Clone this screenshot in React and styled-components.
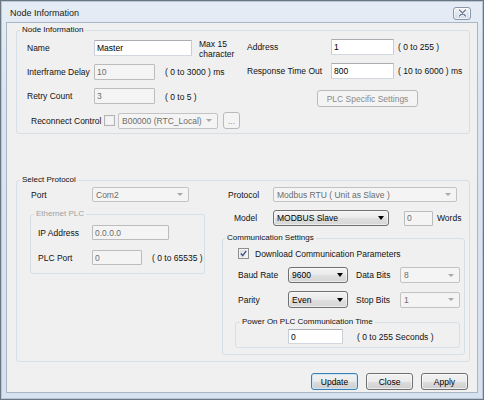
import React from "react";
import styled, { createGlobalStyle, css } from "styled-components";

const FONT = `"Liberation Sans", Arial, sans-serif`;

const GlobalStyle = createGlobalStyle`
  html, body { margin: 0; padding: 0; background: #ffffff; }
  body { font-family: ${FONT}; }
  * { box-sizing: border-box; }
`;

const Window = styled.div`
  width: 484px;
  height: 400px;
  border: 1px solid #6b7683;
  box-shadow: inset 0 0 0 1px #b9c6d6;
  background: linear-gradient(180deg, #e5ecf5 0%, #dbe5f1 25%, #d7e2ef 100%);
  display: flex;
  flex-direction: column;
  padding: 0 5px 6px 5px;
`;

const TitleBar = styled.div`
  height: 21px;
  flex: none;
  display: flex;
  align-items: center;
  justify-content: space-between;
  padding: 3px 7px 0 4px;
`;

const TitleText = styled.span`
  font-size: 9px;
  color: #222;
`;

const CloseButton = styled.div`
  width: 18px;
  height: 13px;
  border: 1px solid #8797ac;
  border-radius: 3px;
  background: linear-gradient(180deg, #f0f4f8 0%, #dde5ef 55%, #d2dce8 100%);
  box-shadow: inset 0 0 0 1px rgba(255, 255, 255, 0.6);
  display: flex;
  align-items: center;
  justify-content: center;
`;

const Panel = styled.div`
  flex: 1;
  background: #f0f0f0;
  border: 1px solid #a9b6c5;
  display: flex;
  flex-direction: column;
`;

const Group = styled.fieldset`
  margin: ${(p) => p.$m || 0};
  padding: 0;
  min-width: 0;
  border: 1px solid #d5dfe5;
  border-radius: 3px;
`;

const Legend = styled.legend`
  margin-left: ${(p) => p.$ml ?? 3}px;
  padding: 0 2px;
  font-size: 8px;
  line-height: 10px;
  color: ${(p) => (p.$disabled ? "#a2a2a2" : "#111")};
`;

const Body = styled.div`
  display: flex;
  flex-direction: ${(p) => p.$dir || "column"};
  gap: ${(p) => p.$gap || 0}px;
  padding: ${(p) => p.$pad || 0};
`;

const Column = styled.div`
  display: flex;
  flex-direction: column;
  flex: none;
  width: ${(p) => p.$w}px;
  gap: ${(p) => p.$gap || 0}px;
  padding-top: ${(p) => p.$pt || 0}px;
`;

const Row = styled.div`
  display: flex;
  align-items: center;
  height: ${(p) => p.$h || 16}px;
  margin-top: ${(p) => p.$mt || 0}px;
  padding-left: ${(p) => p.$indent || 0}px;
`;

const Label = styled.span`
  flex: none;
  width: ${(p) => (p.$w ? `${p.$w}px` : "auto")};
  margin-left: ${(p) => p.$ml || 0}px;
  padding-left: ${(p) => p.$indent || 0}px;
  font-size: 8.5px;
  line-height: 10px;
  color: #111;
  white-space: nowrap;
`;

const Note = styled.span`
  flex: none;
  margin-left: ${(p) => p.$ml || 0}px;
  margin-top: ${(p) => p.$mt || 0}px;
  font-size: 8.5px;
  line-height: 10px;
  color: #111;
  white-space: nowrap;
`;

const TextBox = styled.input`
  flex: none;
  width: ${(p) => p.$w}px;
  height: ${(p) => p.$h || 16}px;
  margin: 0 0 0 ${(p) => p.$ml || 0}px;
  padding: 0 0 0 2px;
  font-family: ${FONT};
  font-size: 8.5px;
  color: #000;
  background: #ffffff;
  border: 1px solid;
  border-color: #abadb3 #c8ccd3 #d3d8de #c8ccd3;
  border-radius: 1px;
  outline: none;
  &:disabled {
    background: #f4f4f4;
    border-color: #bcbcbc;
    color: #6d6d6d;
    -webkit-text-fill-color: #6d6d6d;
    opacity: 1;
  }
`;

const Combo = styled.div`
  flex: none;
  width: ${(p) => p.$w}px;
  height: ${(p) => p.$h || 16}px;
  display: flex;
  align-items: center;
  padding-left: 3px;
  font-size: 8.5px;
  border-radius: 2px;
  ${(p) =>
    p.$list
      ? css`
          border: 1px solid #707070;
          border-radius: 3px;
          background: linear-gradient(180deg, #f3f3f3 0%, #eaeaea 50%, #dfdfdf 51%, #d6d6d6 100%);
          box-shadow: inset 0 0 0 1px rgba(255, 255, 255, 0.55);
          color: #000;
        `
      : css`
          border: 1px solid #c3c3c3;
          background: #f4f4f4;
          color: #6d6d6d;
        `}
`;

const ComboText = styled.span`
  flex: 1;
  overflow: hidden;
  white-space: nowrap;
`;

const Arrow = styled.span`
  flex: none;
  width: 0;
  height: 0;
  margin-right: ${(p) => (p.$list ? 4 : 5)}px;
  border-left: ${(p) => (p.$list ? 3.5 : 3)}px solid transparent;
  border-right: ${(p) => (p.$list ? 3.5 : 3)}px solid transparent;
  border-top: ${(p) => (p.$list ? 4 : 3)}px solid ${(p) => (p.$list ? "#000" : "#a8a8a8")};
`;

const CheckBox = styled.span`
  flex: none;
  width: 11px;
  height: 11px;
  margin-left: ${(p) => p.$ml || 0}px;
  border: 1px solid ${(p) => (p.$disabled ? "#b4b4b4" : "#8e8f8f")};
  background: ${(p) =>
    p.$disabled ? "#f4f4f4" : "linear-gradient(135deg, #dcdcdc 0%, #f7f7f7 100%)"};
  box-shadow: inset 0 0 0 1px ${(p) => (p.$disabled ? "#eeeeee" : "#f2f2f2")};
  display: flex;
  align-items: center;
  justify-content: center;
`;

const Button = styled.button`
  flex: none;
  width: ${(p) => p.$w}px;
  height: ${(p) => p.$h || 17}px;
  margin: ${(p) => p.$mt || 0}px 0 0 ${(p) => p.$ml || 0}px;
  padding: 0;
  font-family: ${FONT};
  font-size: 8.5px;
  color: #000;
  border: 1px solid #707070;
  border-radius: 3px;
  background: linear-gradient(180deg, #f2f2f2 0%, #ebebeb 50%, #dddddd 51%, #cfcfcf 100%);
  box-shadow: inset 0 0 0 1px rgba(255, 255, 255, 0.6);
  ${(p) =>
    p.$default &&
    css`
      border-color: #3c7fb1;
      box-shadow: inset 0 0 0 1px #cde6f7;
    `}
  &:disabled {
    border-color: #b8babc;
    background: #f4f4f4;
    color: #8a8a8a;
    box-shadow: none;
  }
`;

const ButtonBar = styled.div`
  display: flex;
  justify-content: flex-end;
  gap: 8px;
  margin-top: 11px;
  padding-right: 9px;
`;

const NoteStack = styled.span`
  display: flex;
  flex-direction: column;
  margin-left: ${(p) => p.$ml || 0}px;
  margin-top: 2px;
  font-size: 8.5px;
  line-height: 10px;
  color: #111;
  white-space: nowrap;
`;

function DropDown({ w, h, list, children }) {
  return (
    <Combo $w={w} $h={h} $list={list}>
      <ComboText>{children}</ComboText>
      <Arrow $list={list} />
    </Combo>
  );
}

export default function App() {
  return (
    <>
      <GlobalStyle />
      <Window>
        <TitleBar>
          <TitleText>Node Information</TitleText>
          <CloseButton>
            <svg width="9" height="8" viewBox="0 0 9 8">
              <path d="M1.5 1 L7.5 7 M7.5 1 L1.5 7" stroke="#ffffff" strokeWidth="3" strokeLinecap="round" />
              <path d="M1.5 1 L7.5 7 M7.5 1 L1.5 7" stroke="#6f7e92" strokeWidth="1.5" strokeLinecap="round" />
            </svg>
          </CloseButton>
        </TitleBar>

        <Panel>
          <Group $m="2px 7px 0 9px">
            <Legend>Node Information</Legend>
            <Body $dir="row" $pad="4px 0 4px 10px">
              <Column $w={220} $gap={8} $pt={1}>
                <Row>
                  <Label $w={67}>Name</Label>
                  <TextBox $w={98} readOnly value="Master" />
                  <NoteStack $ml={7}>
                    <span>Max 15</span>
                    <span>character</span>
                  </NoteStack>
                </Row>
                <Row>
                  <Label $w={67}>Interframe Delay</Label>
                  <TextBox $w={61} disabled value="10" />
                  <Note $ml={10}>( 0 to 3000 ) ms</Note>
                </Row>
                <Row>
                  <Label $w={67}>Retry Count</Label>
                  <TextBox $w={61} disabled value="3" />
                  <Note $ml={10} $mt={2}>( 0 to 5 )</Note>
                </Row>
                <Row $h={17}>
                  <Label $w={77} $indent={4}>Reconnect Control</Label>
                  <CheckBox $disabled />
                  <Combo $w={100} $h={16} style={{ marginLeft: 3 }}>
                    <ComboText>B00000 (RTC_Local)</ComboText>
                    <Arrow />
                  </Combo>
                  <Button $w={17} $h={17} $ml={5} disabled>
                    ...
                  </Button>
                </Row>
              </Column>
              <Column $w={220} $gap={8}>
                <Row>
                  <Label $w={84}>Address</Label>
                  <TextBox $w={63} readOnly value="1" />
                  <Note $ml={4}>( 0 to 255 )</Note>
                </Row>
                <Row>
                  <Label $w={84}>Response Time Out</Label>
                  <TextBox $w={63} readOnly value="800" />
                  <Note $ml={4}>( 10 to 6000 ) ms</Note>
                </Row>
                <Row $h={17} $mt={3}>
                  <Button $w={101} $ml={70} disabled>
                    PLC Specific Settings
                  </Button>
                </Row>
              </Column>
            </Body>
          </Group>

          <Group $m="41px 7px 0 9px">
            <Legend>Select Protocol</Legend>
            <Body $dir="row" $gap={17} $pad="2px 4px 6px 13px">
              <Column $w={175}>
                <Row $h={15}>
                  <Label $w={62} $indent={1}>Port</Label>
                  <DropDown w={97} h={15}>Com2</DropDown>
                </Row>
                <Group $m="7px 0 0 0">
                  <Legend $disabled>Ethernet PLC</Legend>
                  <Body $gap={10} $pad="6px 0 8px 7px">
                    <Row $h={15}>
                      <Label $w={54}>IP Address</Label>
                      <TextBox $w={77} $h={15} disabled value="0.0.0.0" />
                    </Row>
                    <Row $h={15}>
                      <Label $w={54}>PLC Port</Label>
                      <TextBox $w={50} $h={15} disabled value="0" />
                      <Note $ml={10}>( 0 to 65535 )</Note>
                    </Row>
                  </Body>
                </Group>
              </Column>

              <Column $w={243}>
                <Row $h={15}>
                  <Label $w={51} $indent={6}>Protocol</Label>
                  <DropDown w={184} h={15}>Modbus RTU ( Unit as Slave )</DropDown>
                </Row>
                <Row $mt={8}>
                  <Label $w={51} $indent={12}>Model</Label>
                  <DropDown w={116} list>MODBUS Slave</DropDown>
                  <TextBox $w={29} $h={15} $ml={15} disabled value="0" />
                  <Note $ml={4}>Words</Note>
                </Row>
                <Group $m="7px 0 0 0">
                  <Legend $ml={2}>Communication Settings</Legend>
                  <Body $pad="5px 4px 6px 12px">
                    <Row $h={11} $indent={3}>
                      <CheckBox>
                        <svg width="7" height="7" viewBox="0 0 7 7">
                          <path d="M0.8 3.6 L2.7 5.6 L6.2 0.8" fill="none" stroke="#3d5596" strokeWidth="1.4" />
                        </svg>
                      </CheckBox>
                      <Note $ml={6}>Download Communication Parameters</Note>
                    </Row>
                    <Row $mt={8} $indent={3}>
                      <Label $w={50}>Baud Rate</Label>
                      <DropDown w={60} list>9600</DropDown>
                      <Label $w={44} $ml={8}>Data Bits</Label>
                      <DropDown w={60}>8</DropDown>
                    </Row>
                    <Row $h={17} $mt={8} $indent={3}>
                      <Label $w={50}>Parity</Label>
                      <DropDown w={60} h={17} list>Even</DropDown>
                      <Label $w={44} $ml={8}>Stop Bits</Label>
                      <DropDown w={60}>1</DropDown>
                    </Row>
                    <Group $m="9px 0 0 0">
                      <Legend $ml={4}>Power On PLC Communication Time</Legend>
                      <Body $dir="row" $pad="2px 0 3px 52px">
                        <Row $h={15}>
                          <TextBox $w={55} $h={15} readOnly value="0" />
                          <Note $ml={14}>( 0 to 255 Seconds )</Note>
                        </Row>
                      </Body>
                    </Group>
                  </Body>
                </Group>
              </Column>
            </Body>
          </Group>

          <ButtonBar>
            <Button $w={47} $default>Update</Button>
            <Button $w={47}>Close</Button>
            <Button $w={47}>Apply</Button>
          </ButtonBar>
        </Panel>
      </Window>
    </>
  );
}
